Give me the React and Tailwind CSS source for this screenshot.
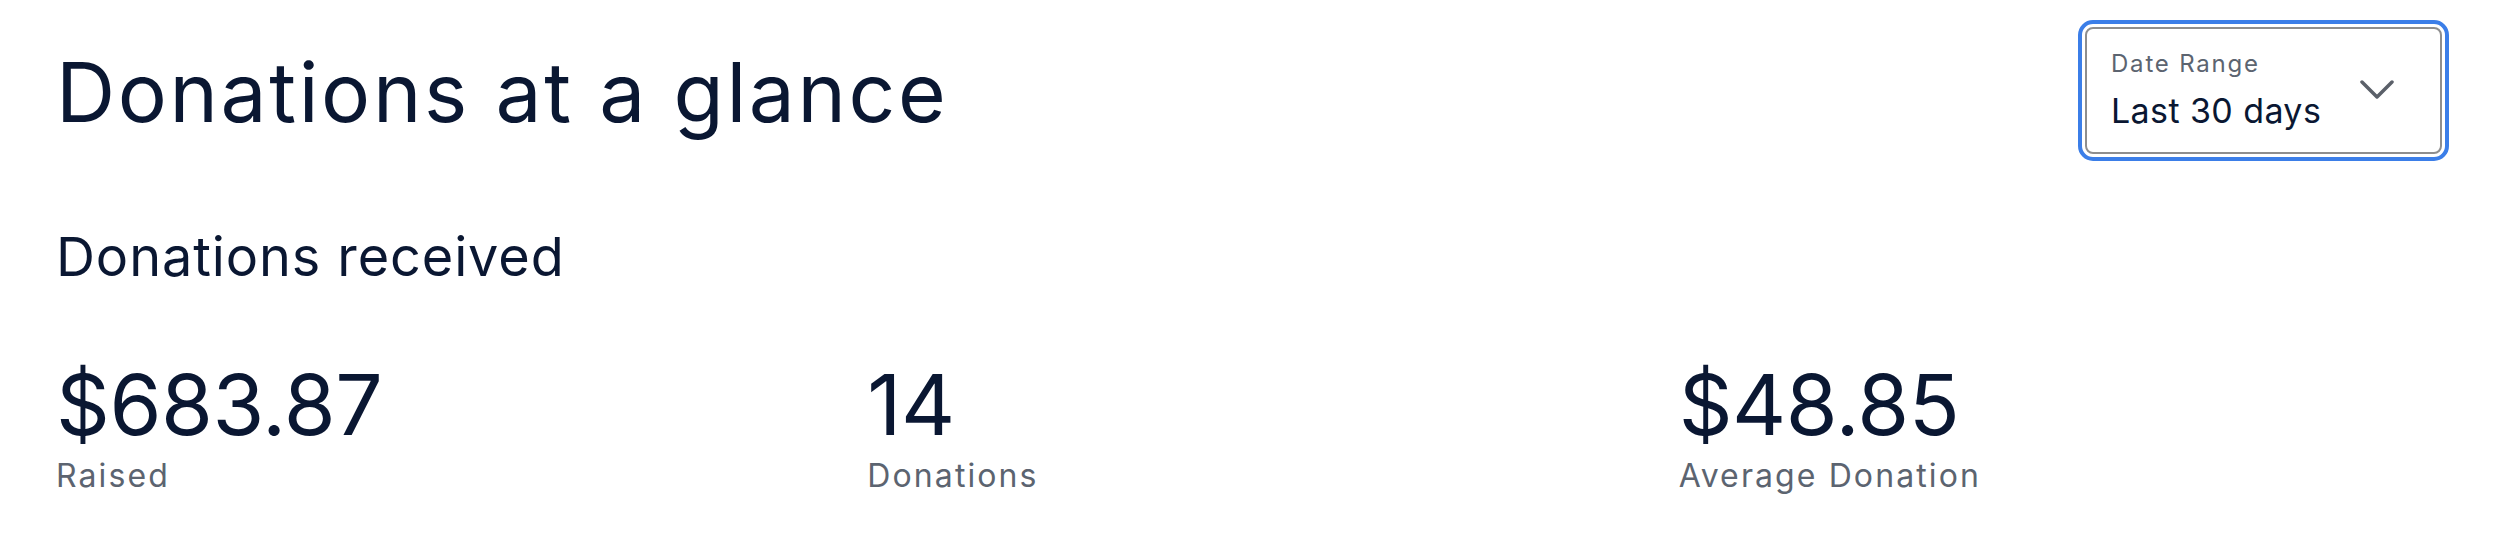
import React from "react";

function Stat({ value, label }) {
  return (
    <div className="flex flex-col">
      <div className="text-[84px] leading-none text-[#0a1732] tracking-[-0.5px]">{value}</div>
      <div className="mt-[13px] text-[32px] leading-none text-[#5c6470] tracking-[2.1px]">{label}</div>
    </div>
  );
}

export default function App() {
  return (
    <div
      className="w-[2498px] h-[560px] bg-white px-[56px] pt-[27px]"
      style={{ fontFamily: "Inter, 'Noto Sans', sans-serif" }}
    >
      <div className="flex justify-between items-start">
        <h1 className="mt-[25px] text-[82px] leading-none text-[#0a1732] font-normal tracking-[2.6px]">
          Donations at a glance
        </h1>
        <div className="w-[357px] h-[127px] border-2 border-[#8e8e8e] rounded-[8px] outline-4 outline-[#3b7ee8] outline-offset-[3px] flex items-center justify-between pl-[24px] pr-[46px]">
          <div className="flex flex-col">
            <span className="text-[24px] leading-[28px] text-[#5c6470] tracking-[1.8px]">Date Range</span>
            <span className="mt-[13px] text-[34px] leading-[40px] text-[#0a1732] tracking-[0.4px]">Last 30 days</span>
          </div>
          <svg width="34" height="20" viewBox="0 0 34 20" fill="none" className="mb-[2px]">
            <path d="M2 2 L17 17 L32 2" stroke="#5b6069" strokeWidth="3.5" strokeLinecap="round" strokeLinejoin="round" />
          </svg>
        </div>
      </div>
      <h2 className="mt-[76px] text-[54px] leading-none text-[#0a1732] font-normal tracking-[0.9px]">
        Donations received
      </h2>
      <div className="mt-[79px] grid grid-cols-3 gap-12">
        <Stat value="$683.87" label="Raised" />
        <Stat value="14" label="Donations" />
        <Stat value="$48.85" label="Average Donation" />
      </div>
    </div>
  );
}
